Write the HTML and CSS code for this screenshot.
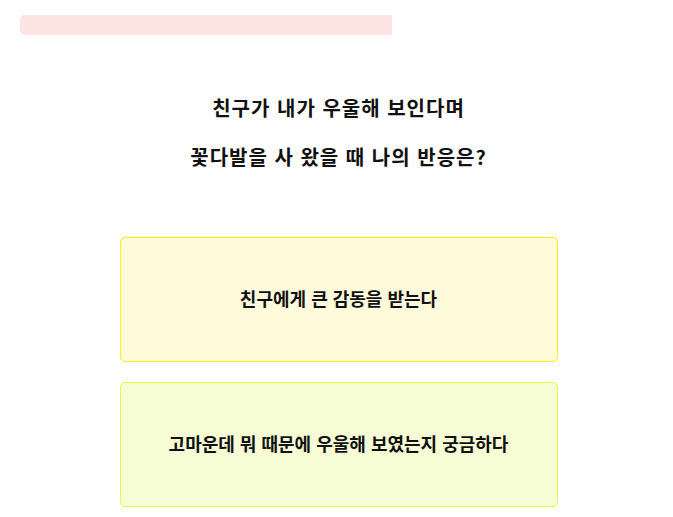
FILE: index.html
```html
<!DOCTYPE html>
<html lang="ko">
<head>
    <meta charset="UTF-8">
    <meta name="viewport" content="width=device-width, initial-scale=1.0">
    <title>심리 테스트</title>
    <link rel="stylesheet" href="styles.css">
</head>
<body>
    <div class="test-container">
        <div class="progress-track">
            <div class="progress-fill" style="width: 58.33%"></div>
        </div>
        <h3 class="question">친구가 내가 우울해 보인다며<br>꽃다발을 사 왔을 때 나의 반응은?</h3>
        <div class="answers">
            <button class="answer answer-a">친구에게 큰 감동을 받는다</button>
            <button class="answer answer-b">고마운데 뭐 때문에 우울해 보였는지 궁금하다</button>
        </div>
    </div>
</body>
</html>
```

FILE: styles.css
```css
body {
    margin: 0;
    background-color: white;
    font-family: "Noto Sans CJK JP", "Noto Sans CJK KR", sans-serif;
    color: #111;
}
.test-container {
    padding: 15px 16px 0 20px;
}
.progress-track {
    height: 20px;
    border-radius: 5px;
    overflow: hidden;
}
.progress-fill {
    height: 100%;
    background-color: #ffe4e4;
}
.question {
    margin: 48px 0 0;
    font-size: 20px;
    font-weight: 700;
    letter-spacing: 1px;
    line-height: 49px;
    text-align: center;
}
.answers {
    display: flex;
    flex-direction: column;
    align-items: center;
    gap: 20px;
    margin-top: 56px;
}
.answer {
    width: 438px;
    height: 125px;
    padding: 0 0 4px;
    border-radius: 5px;
    font-family: inherit;
    font-size: 18px;
    font-weight: 700;
    color: #111;
    cursor: pointer;
}
.answer-a {
    background-color: #fffbdb;
    border: 1px solid #fff200;
}
.answer-b {
    background-color: #f6fdd4;
    border: 1px solid #e6f84a;
}
```
